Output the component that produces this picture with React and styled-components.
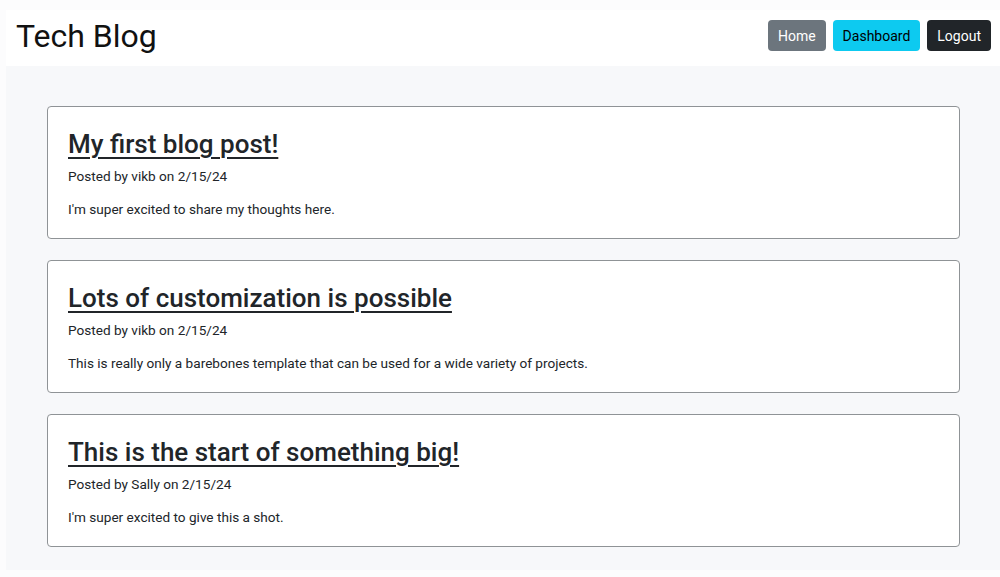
import React from "react";
import styled, { createGlobalStyle } from "styled-components";

const posts = [
  {
    title: "My first blog post!",
    author: "vikb",
    date: "2/15/24",
    body: "I'm super excited to share my thoughts here.",
  },
  {
    title: "Lots of customization is possible",
    author: "vikb",
    date: "2/15/24",
    body: "This is really only a barebones template that can be used for a wide variety of projects.",
  },
  {
    title: "This is the start of something big!",
    author: "Sally",
    date: "2/15/24",
    body: "I'm super excited to give this a shot.",
  },
];

function App() {
  return (
    <>
      <GlobalStyle />
      <Page>
        <Header>
          <Brand>Tech Blog</Brand>
          <Nav>
            <NavButton variant="secondary">Home</NavButton>
            <NavButton variant="info">Dashboard</NavButton>
            <NavButton variant="dark">Logout</NavButton>
          </Nav>
        </Header>
        <Main>
          {posts.map((post) => (
            <PostCard key={post.title}>
              <PostTitle href="#">{post.title}</PostTitle>
              <Meta>
                Posted by {post.author} on {post.date}
              </Meta>
              <Body>{post.body}</Body>
            </PostCard>
          ))}
        </Main>
      </Page>
    </>
  );
}

const GlobalStyle = createGlobalStyle`
  body {
    margin: 0;
    background: #fcfcfd;
    font-family: Roboto, "Liberation Sans", sans-serif;
    color: #212529;
  }
`;

const Page = styled.div`
  margin: 10px 0 0 6px;
  height: 560px;
  background: #f7f8fa;
`;

const Header = styled.header`
  display: flex;
  align-items: center;
  justify-content: space-between;
  height: 56px;
  box-sizing: border-box;
  padding: 0 9px 5px 10px;
  background: #fff;
`;

const Brand = styled.h1`
  margin: 0;
  font-size: 32px;
  font-weight: 400;
  color: #111;
`;

const Nav = styled.nav`
  display: flex;
  gap: 7px;
`;

const colors = {
  secondary: { bg: "#6c757d", fg: "#fff" },
  info: { bg: "#0dcaf0", fg: "#000" },
  dark: { bg: "#212529", fg: "#fff" },
};

const NavButton = styled.button`
  height: 31px;
  padding: 0 10px;
  border: none;
  border-radius: 4px;
  font-family: inherit;
  font-size: 14px;
  background: ${(p) => colors[p.variant].bg};
  color: ${(p) => colors[p.variant].fg};
`;

const Main = styled.main`
  display: flex;
  flex-direction: column;
  gap: 21px;
  padding: 40px 40px 0 41px;
`;

const PostCard = styled.article`
  height: 133px;
  box-sizing: border-box;
  padding: 21px 20px 20px;
  background: #fff;
  border: 1px solid #8f9396;
  border-radius: 4px;
`;

const PostTitle = styled.a`
  display: inline-block;
  font-size: 26px;
  font-weight: 500;
  line-height: 32px;
  color: #212529;
  text-decoration: underline;
  text-underline-offset: 4px;
  text-decoration-thickness: 2px;
`;

const Meta = styled.p`
  margin: 6px 0 0;
  font-size: 13.6px;
  line-height: 21px;
`;

const Body = styled.p`
  margin: 12px 0 0;
  font-size: 13.6px;
  line-height: 21px;
`;

export default App;
